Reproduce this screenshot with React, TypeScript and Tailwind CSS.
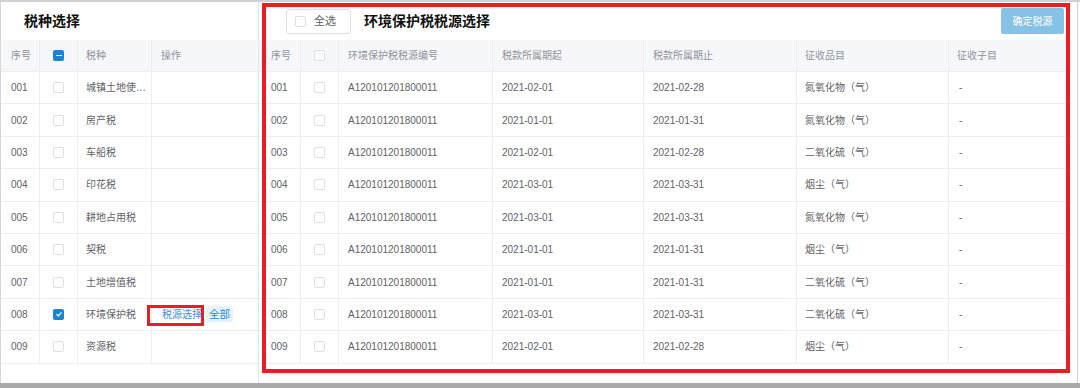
import React from "react";

interface TaxType {
  no: string;
  name: string;
  checked?: boolean;
}

interface TaxSource {
  no: string;
  code: string;
  start: string;
  end: string;
  item: string;
  sub: string;
}

const taxTypes: TaxType[] = [
  { no: "001", name: "城镇土地使用税" },
  { no: "002", name: "房产税" },
  { no: "003", name: "车船税" },
  { no: "004", name: "印花税" },
  { no: "005", name: "耕地占用税" },
  { no: "006", name: "契税" },
  { no: "007", name: "土地增值税" },
  { no: "008", name: "环境保护税", checked: true },
  { no: "009", name: "资源税" },
];

const sources: TaxSource[] = [
  { no: "001", code: "A120101201800011", start: "2021-02-01", end: "2021-02-28", item: "氮氧化物（气）", sub: "-" },
  { no: "002", code: "A120101201800011", start: "2021-01-01", end: "2021-01-31", item: "氮氧化物（气）", sub: "-" },
  { no: "003", code: "A120101201800011", start: "2021-02-01", end: "2021-02-28", item: "二氧化硫（气）", sub: "-" },
  { no: "004", code: "A120101201800011", start: "2021-03-01", end: "2021-03-31", item: "烟尘（气）", sub: "-" },
  { no: "005", code: "A120101201800011", start: "2021-03-01", end: "2021-03-31", item: "氮氧化物（气）", sub: "-" },
  { no: "006", code: "A120101201800011", start: "2021-01-01", end: "2021-01-31", item: "烟尘（气）", sub: "-" },
  { no: "007", code: "A120101201800011", start: "2021-01-01", end: "2021-01-31", item: "二氧化硫（气）", sub: "-" },
  { no: "008", code: "A120101201800011", start: "2021-03-01", end: "2021-03-31", item: "二氧化硫（气）", sub: "-" },
  { no: "009", code: "A120101201800011", start: "2021-02-01", end: "2021-02-28", item: "烟尘（气）", sub: "-" },
];

const Checkbox: React.FC<{ state?: "off" | "on" | "half" }> = ({ state = "off" }) => {
  if (state === "off") {
    return <span className="block w-[11px] h-[11px] rounded-[2px] border border-[#dcdfe6] bg-white" />;
  }
  return (
    <span className="flex items-center justify-center w-[11px] h-[11px] rounded-[2px] bg-[#1a84cf]">
      {state === "half" ? (
        <span className="block w-[6px] h-[1.5px] bg-white" />
      ) : (
        <svg width="8" height="8" viewBox="0 0 8 8">
          <path d="M1.5 4.2 L3.3 5.9 L6.6 2.3" fill="none" stroke="white" strokeWidth="1.2" />
        </svg>
      )}
    </span>
  );
};

// column helpers
const cell = "h-full flex items-center border-r border-[#ebeef5] overflow-hidden";

const App: React.FC = () => {
  return (
    <div
      className="relative w-[1080px] h-[388px] bg-white flex flex-col overflow-hidden text-[10px] text-[#606266]"
      style={{ fontFamily: '"Liberation Sans", "Noto Sans CJK SC", sans-serif' }}
    >
      <div className="h-[2px] bg-[#d2d2d2]" />

      <div className="flex flex-1 min-h-0">
        <div className="w-px bg-[#d6d6d6]" />

        {/* 左侧：税种选择 */}
        <div className="w-[258px] flex flex-col border-r border-[#e4e7ed]">
          <div className="h-[38px] flex items-center pl-[23px] text-[14px] font-bold text-[#111]">税种选择</div>
          <div className="h-[32px] flex bg-[#f5f7fa] border-b border-[#ebeef5] text-[#909399]">
            <div className={`${cell} w-[39px] pl-[10px]`}>序号</div>
            <div className={`${cell} w-[38px] justify-center`}>
              <Checkbox state="half" />
            </div>
            <div className={`${cell} w-[74px] pl-[8px]`}>税种</div>
            <div className="h-full flex items-center flex-1 pl-[9px]">操作</div>
          </div>
          {taxTypes.map((t) => (
            <div key={t.no} className="h-[32.4px] flex border-b border-[#ebeef5]">
              <div className={`${cell} w-[39px] pl-[10px]`}>{t.no}</div>
              <div className={`${cell} w-[38px] justify-center`}>
                <Checkbox state={t.checked ? "on" : "off"} />
              </div>
              <div className={`${cell} w-[74px] pl-[8px] pr-px`}>
                <span className="truncate">{t.name}</span>
              </div>
              <div className="h-full flex items-center flex-1 pl-[10px]">
                {t.checked && (
                  <>
                    <span className="text-[#3b8fd9]">税源选择</span>
                    <span className="ml-[4px] h-[16px] px-[3px] flex items-center rounded-[2px] bg-[#e6f2fc] text-[#2a88d8] text-[10.5px]">
                      全部
                    </span>
                  </>
                )}
              </div>
            </div>
          ))}
        </div>

        {/* 右侧：税源选择 */}
        <div className="w-[813px] flex flex-col">
          <div className="h-[38px] flex items-center">
            <button className="ml-[27px] w-[65px] h-[25px] flex items-center pl-[8px] gap-[8px] rounded-[3px] border border-[#dcdfe6] bg-white text-[11px] text-[#606266]">
              <Checkbox />
              全选
            </button>
            <div className="ml-[13px] text-[14px] font-bold text-[#111]">环境保护税税源选择</div>
            <button className="ml-auto mr-[8px] w-[63px] h-[26px] rounded-[2px] bg-[#86c2e6] text-white text-[10px]">
              确定税源
            </button>
          </div>
          <div className="h-[32px] flex bg-[#f5f7fa] border-b border-[#ebeef5] text-[#909399]">
            <div className={`${cell} w-[42px] pl-[12px]`}>序号</div>
            <div className={`${cell} w-[38px] justify-center`}>
              <Checkbox />
            </div>
            <div className={`${cell} w-[154px] pl-[9px]`}>环境保护税税源编号</div>
            <div className={`${cell} w-[151px] pl-[9px]`}>税款所属期起</div>
            <div className={`${cell} w-[153px] pl-[9px]`}>税款所属期止</div>
            <div className={`${cell} w-[152px] pl-[8px]`}>征收品目</div>
            <div className="h-full flex items-center flex-1 pl-[8px]">征收子目</div>
          </div>
          {sources.map((s) => (
            <div key={s.no} className="h-[32.4px] flex border-b border-[#ebeef5]">
              <div className={`${cell} w-[42px] pl-[12px]`}>{s.no}</div>
              <div className={`${cell} w-[38px] justify-center`}>
                <Checkbox />
              </div>
              <div className={`${cell} w-[154px] pl-[9px]`}>{s.code}</div>
              <div className={`${cell} w-[151px] pl-[9px]`}>{s.start}</div>
              <div className={`${cell} w-[153px] pl-[9px]`}>{s.end}</div>
              <div className={`${cell} w-[152px] pl-[8px]`}>{s.item}</div>
              <div className="h-full flex items-center flex-1 pl-[10px]">{s.sub}</div>
            </div>
          ))}
        </div>

        <div className="w-[6px] border-r border-[#cfcfcf]" />
      </div>

      <div className="h-[5px] bg-[#a9a9a9]" />

      {/* 标注框 */}
      <div className="absolute left-[262px] top-[3px] w-[808px] h-[370px] border-4 border-[#ec1c24] pointer-events-none" />
      <div className="absolute left-[147px] top-[305px] w-[57px] h-[21px] border-[3px] border-[#ec1c24] pointer-events-none" />
    </div>
  );
};

export default App;
